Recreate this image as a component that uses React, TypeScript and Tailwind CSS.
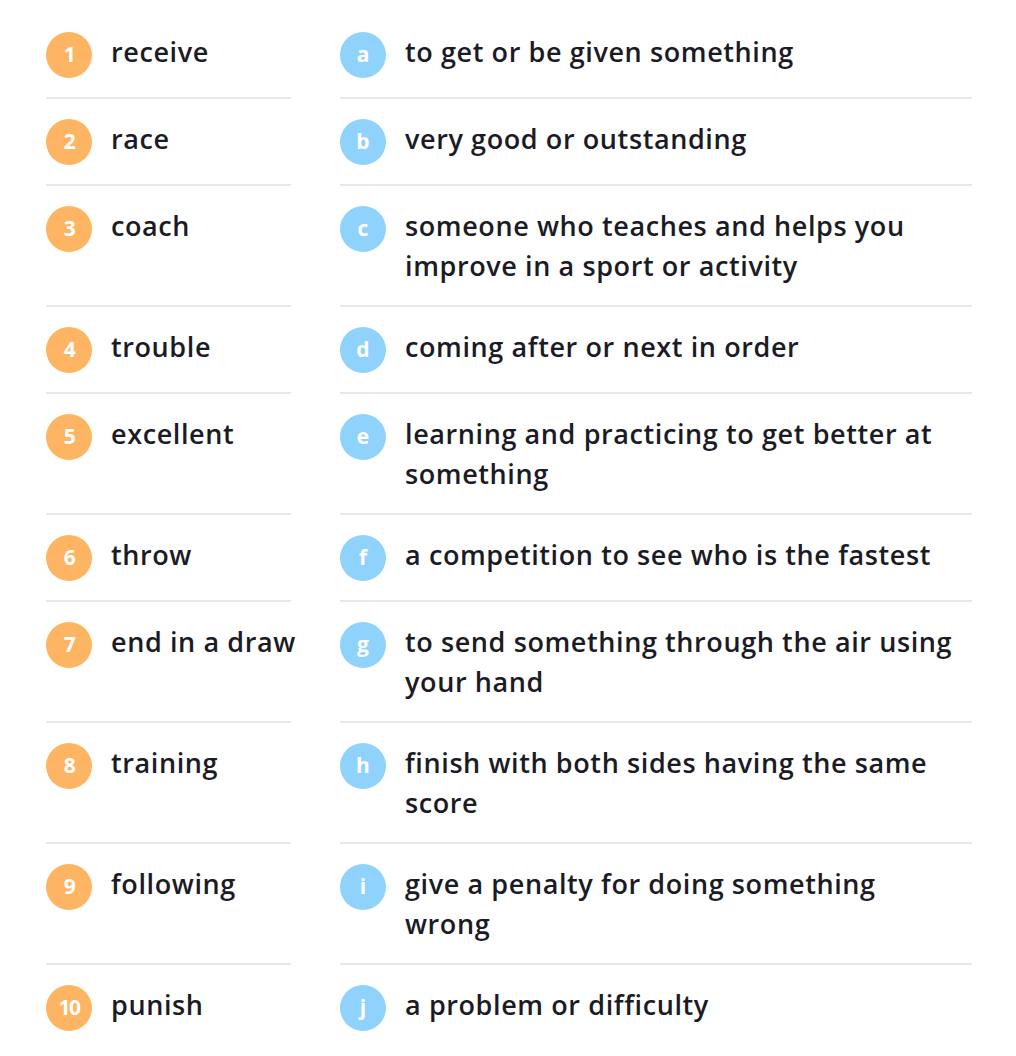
import React from "react";

type Row = { n: string; word: string; l: string; def: string[] };

const rows: Row[] = [
  { n: "1", word: "receive", l: "a", def: ["to get or be given something"] },
  { n: "2", word: "race", l: "b", def: ["very good or outstanding"] },
  { n: "3", word: "coach", l: "c", def: ["someone who teaches and helps you", "improve in a sport or activity"] },
  { n: "4", word: "trouble", l: "d", def: ["coming after or next in order"] },
  { n: "5", word: "excellent", l: "e", def: ["learning and practicing to get better at", "something"] },
  { n: "6", word: "throw", l: "f", def: ["a competition to see who is the fastest"] },
  { n: "7", word: "end in a draw", l: "g", def: ["to send something through the air using", "your hand"] },
  { n: "8", word: "training", l: "h", def: ["finish with both sides having the same", "score"] },
  { n: "9", word: "following", l: "i", def: ["give a penalty for doing something", "wrong"] },
  { n: "10", word: "punish", l: "j", def: ["a problem or difficulty"] },
];

export default function App() {
  return (
    <div
      className="w-[1016px] min-h-[1056px] bg-white pt-[12px] pl-[46px] pr-[44px] text-[#1b1b26]"
      style={{ fontFamily: '"Open Sans", "Liberation Sans", sans-serif' }}
    >
      {rows.map((r, i) => {
        const last = i === rows.length - 1;
        const border = last ? "" : "border-b-2 border-[#e8e8e8]";
        return (
          <div key={r.n} className="flex gap-[49px]">
            <div className={`w-[245px] shrink-0 flex items-start pt-[20px] pb-[19px] ${border}`}>
              <div className="w-[46px] h-[46px] rounded-full bg-[#fdb563] flex items-center justify-center text-white font-bold text-[21px] tracking-[-1.5px] shrink-0">
                {r.n}
              </div>
              <div className="ml-[19px] text-[27px] leading-[40px] font-semibold whitespace-nowrap tracking-[0.6px]">
                {r.word}
              </div>
            </div>
            <div className={`flex-1 flex items-start pt-[20px] pb-[19px] ${border}`}>
              <div className="w-[46px] h-[46px] rounded-full bg-[#8fd3fd] flex items-center justify-center text-white font-bold text-[21px] shrink-0">
                {r.l}
              </div>
              <div className="ml-[19px] text-[27px] leading-[40px] font-semibold tracking-[0.6px]">
                {r.def.map((d) => (
                  <div key={d} className="whitespace-nowrap">{d}</div>
                ))}
              </div>
            </div>
          </div>
        );
      })}
    </div>
  );
}
